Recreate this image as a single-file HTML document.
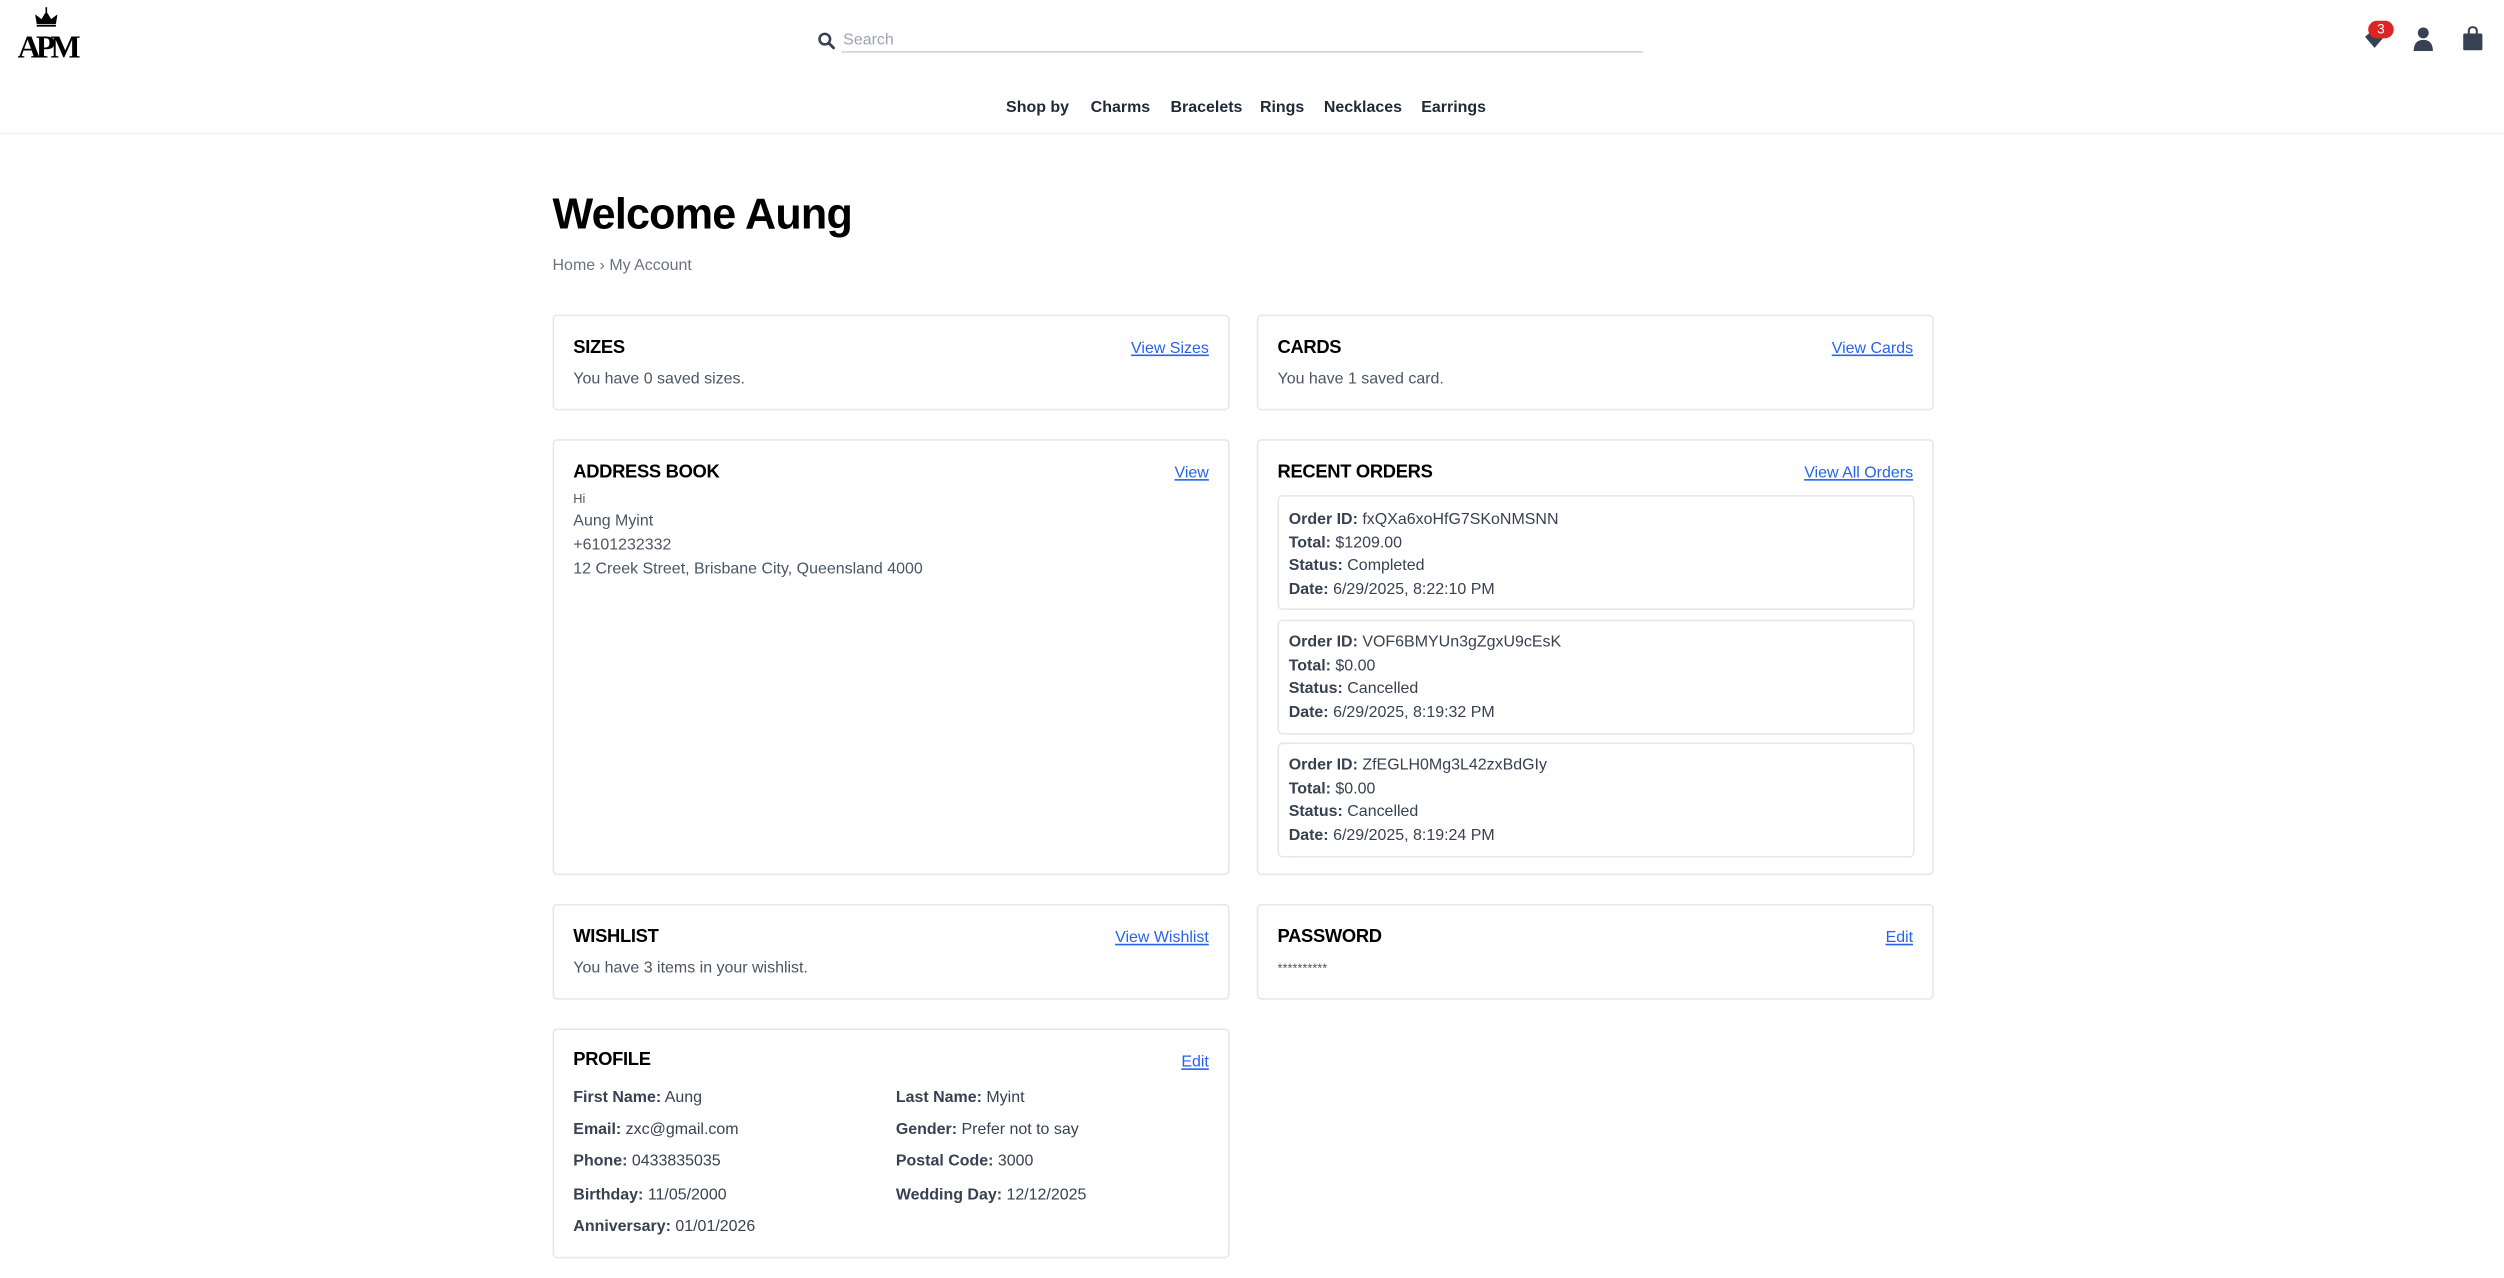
<!DOCTYPE html>
<html><head><meta charset="utf-8">
<style>
*{margin:0;padding:0;box-sizing:border-box}
html,body{width:2504px;height:1277px;overflow:hidden;background:#fff}
#w{position:absolute;left:0;top:0;width:1568px;height:800px;transform:scale(1.5969);transform-origin:0 0;font-family:"Liberation Sans",Arial,sans-serif;color:#374151}
.a{position:absolute;white-space:nowrap;line-height:1}
.card{position:absolute;border:1px solid #e5e7eb;border-radius:3px;background:#fff}
.h{font-size:11.5px;color:#000;font-weight:bold;letter-spacing:-0.2px}
.lk{font-size:10px;color:#2563eb;text-decoration:underline}
.tx{font-size:10px;color:#4b5563}
.ob{position:absolute;left:800px;width:399px;border:1px solid #e5e7eb;border-radius:3px}
.ob div{position:absolute;left:6px;font-size:10px;color:#374151;white-space:nowrap;line-height:1}
b{font-weight:bold;color:#374151}
.nav{font-size:10px;font-weight:bold;color:#1f2937;top:63px}
</style></head><body><div id="w">
<svg class="a" style="left:10px;top:4px" width="46" height="34" viewBox="0 0 46 34">
<path d="M13 11 L12 5 L16 8 L19 3 L22 8 L26 5 L25 11 Z" fill="#000"/>
<rect x="18.5" y="0.5" width="1" height="3" fill="#000"/>
<rect x="13" y="11.5" width="12" height="1.2" fill="#000"/>
<text x="1" y="32" font-family="Liberation Serif,serif" font-size="20" font-weight="bold" fill="#000" letter-spacing="-3">APM</text>
</svg>
<svg class="a" style="left:512px;top:20px" width="11" height="11" viewBox="0 0 11 11"><circle cx="4.5" cy="4.5" r="3.3" fill="none" stroke="#374151" stroke-width="1.6"/><path d="M7 7 L10 10" stroke="#374151" stroke-width="1.8" stroke-linecap="round"/></svg>
<div class="a" style="left:528px;top:21px;font-size:10px;color:#9ca3af">Search</div>
<div class="a" style="left:527px;top:31.5px;width:502px;height:1px;background:#cbd5e1"></div>
<svg class="a" style="left:1479px;top:17px" width="18" height="15" viewBox="0 0 18 15"><path d="M2 6 L8 1 L14 6 L8 13 Z" fill="#374151"/></svg>
<div class="a" style="left:1483px;top:12.5px;width:16px;height:11px;border-radius:6px;background:#dc2626;color:#fff;font-size:8.5px;text-align:center;line-height:11px">3</div>
<svg class="a" style="left:1511px;top:17px" width="13" height="15" viewBox="0 0 13 15"><circle cx="6.5" cy="3.6" r="3.4" fill="#374151"/><path d="M0.5 15 Q0.5 8 6.5 8 Q12.5 8 12.5 15 Z" fill="#374151"/></svg>
<svg class="a" style="left:1542px;top:16px" width="13" height="16" viewBox="0 0 13 16"><path d="M4 6 V3.5 Q4 1 6.5 1 Q9 1 9 3.5 V6" fill="none" stroke="#374151" stroke-width="1.3"/><rect x="0.5" y="5" width="12" height="10.5" rx="1" fill="#374151"/></svg>
<div class="a nav" style="left:630px">Shop by</div>
<div class="a nav" style="left:683px">Charms</div>
<div class="a nav" style="left:733px">Bracelets</div>
<div class="a nav" style="left:789px">Rings</div>
<div class="a nav" style="left:829px">Necklaces</div>
<div class="a nav" style="left:890px">Earrings</div>
<div class="a" style="left:0;top:83px;width:1568px;height:1px;background:#eef0f2"></div>
<div class="a" style="left:346px;top:121px;font-size:27px;font-weight:bold;color:#000;letter-spacing:-0.5px">Welcome Aung</div>
<div class="a" style="left:346px;top:162px;font-size:10px;color:#6b7280">Home › My Account</div>

<div class="card" style="left:346px;top:197px;width:424px;height:60px"></div>
<div class="a h" style="left:359px;top:213px">SIZES</div>
<div class="a lk" style="right:811px;top:214px">View Sizes</div>
<div class="a tx" style="left:359px;top:233px">You have 0 saved sizes.</div>

<div class="card" style="left:787px;top:197px;width:424px;height:60px"></div>
<div class="a h" style="left:800px;top:213px">CARDS</div>
<div class="a lk" style="right:370px;top:214px">View Cards</div>
<div class="a tx" style="left:800px;top:233px">You have 1 saved card.</div>

<div class="card" style="left:346px;top:275px;width:424px;height:273px"></div>
<div class="a h" style="left:359px;top:291px">ADDRESS BOOK</div>
<div class="a lk" style="right:811px;top:292px">View</div>
<div class="a" style="left:359px;top:309px;font-size:8px;color:#4b5563">Hi</div>
<div class="a tx" style="left:359px;top:322px">Aung Myint</div>
<div class="a tx" style="left:359px;top:337px">+6101232332</div>
<div class="a tx" style="left:359px;top:352px">12 Creek Street, Brisbane City, Queensland 4000</div>

<div class="card" style="left:787px;top:275px;width:424px;height:273px"></div>
<div class="a h" style="left:800px;top:291px">RECENT ORDERS</div>
<div class="a lk" style="right:370px;top:292px">View All Orders</div>
<div class="ob" style="top:310px;height:72px"><div style="top:10px"><b>Order ID:</b> fxQXa6xoHfG7SKoNMSNN</div><div style="top:24.5px"><b>Total:</b> $1209.00</div><div style="top:39px"><b>Status:</b> Completed</div><div style="top:53.5px"><b>Date:</b> 6/29/2025, 8:22:10 PM</div></div>
<div class="ob" style="top:388px;height:72px"><div style="top:9px"><b>Order ID:</b> VOF6BMYUn3gZgxU9cEsK</div><div style="top:23.5px"><b>Total:</b> $0.00</div><div style="top:38px"><b>Status:</b> Cancelled</div><div style="top:52.5px"><b>Date:</b> 6/29/2025, 8:19:32 PM</div></div>
<div class="ob" style="top:465px;height:72px"><div style="top:9px"><b>Order ID:</b> ZfEGLH0Mg3L42zxBdGIy</div><div style="top:23.5px"><b>Total:</b> $0.00</div><div style="top:38px"><b>Status:</b> Cancelled</div><div style="top:52.5px"><b>Date:</b> 6/29/2025, 8:19:24 PM</div></div>

<div class="card" style="left:346px;top:566px;width:424px;height:60px"></div>
<div class="a h" style="left:359px;top:582px">WISHLIST</div>
<div class="a lk" style="right:811px;top:583px">View Wishlist</div>
<div class="a tx" style="left:359px;top:602px">You have 3 items in your wishlist.</div>

<div class="card" style="left:787px;top:566px;width:424px;height:60px"></div>
<div class="a h" style="left:800px;top:582px">PASSWORD</div>
<div class="a lk" style="right:370px;top:583px">Edit</div>
<div class="a" style="left:800px;top:603px;font-size:8px;color:#4b5563">**********</div>

<div class="card" style="left:346px;top:644px;width:424px;height:144px"></div>
<div class="a h" style="left:359px;top:659px">PROFILE</div>
<div class="a lk" style="right:811px;top:661px">Edit</div>
<div class="a tx" style="left:359px;top:683px;color:#374151"><b>First Name:</b> Aung</div>
<div class="a tx" style="left:561px;top:683px;color:#374151"><b>Last Name:</b> Myint</div>
<div class="a tx" style="left:359px;top:703px;color:#374151"><b>Email:</b> zxc@gmail.com</div>
<div class="a tx" style="left:561px;top:703px;color:#374151"><b>Gender:</b> Prefer not to say</div>
<div class="a tx" style="left:359px;top:723px;color:#374151"><b>Phone:</b> 0433835035</div>
<div class="a tx" style="left:561px;top:723px;color:#374151"><b>Postal Code:</b> 3000</div>
<div class="a tx" style="left:359px;top:744px;color:#374151"><b>Birthday:</b> 11/05/2000</div>
<div class="a tx" style="left:561px;top:744px;color:#374151"><b>Wedding Day:</b> 12/12/2025</div>
<div class="a tx" style="left:359px;top:764px;color:#374151"><b>Anniversary:</b> 01/01/2026</div>
</div></body></html>
